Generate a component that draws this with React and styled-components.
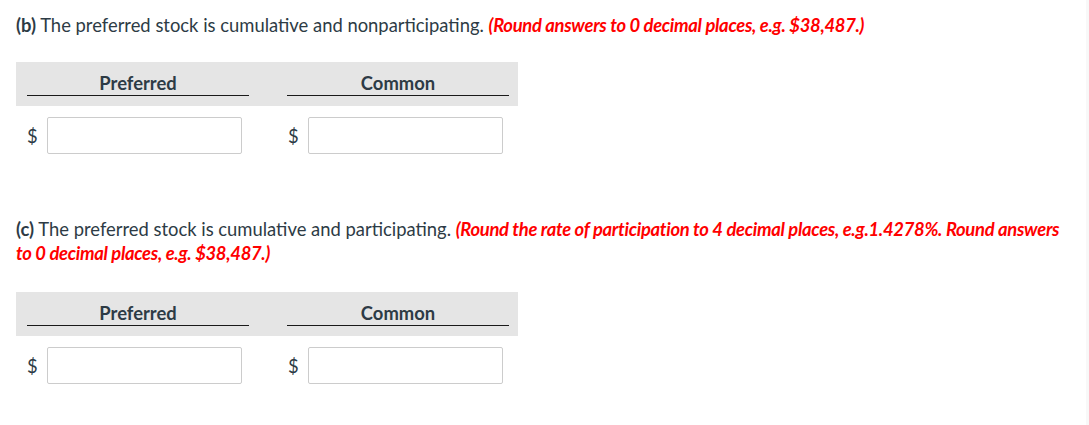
import styled, { createGlobalStyle } from "styled-components";

const GlobalStyle = createGlobalStyle`
  body {
    margin: 0;
    background: #ffffff;
    font-family: Lato, "Open Sans", "Noto Sans", sans-serif;
    color: #2d3b45;
  }
`;

const Page = styled.div`
  min-height: 425px;
  box-sizing: border-box;
  padding: 13px 8px 0 16px;
  border-right: 3px solid #f8f8f8;
`;

const Section = styled.div`
  margin-bottom: ${(p) => p.$gap || 0}px;
`;

const Question = styled.p`
  margin: 0;
  font-size: 18.4px;
  line-height: 24px;
  color: #2d3b45;
`;

const Label = styled.span`
  font-weight: 700;
`;

const Hint = styled.span`
  color: #ff0000;
  font-weight: 700;
  font-style: italic;
  letter-spacing: -0.3px;
`;

const HeaderRow = styled.div`
  display: grid;
  grid-template-columns: 252px 250px;
  width: 502px;
  height: 44px;
  margin-top: ${(p) => p.$top}px;
  background: #e5e5e5;
`;

const HeaderCell = styled.div`
  padding: 10px 0 0 ${(p) => p.$left}px;
`;

const HeaderLabel = styled.div`
  width: 222px;
  height: 23px;
  line-height: 23px;
  text-align: center;
  font-weight: 700;
  font-size: 18.4px;
  border-bottom: 1px solid #1a1a1a;
`;

const InputRow = styled.div`
  display: grid;
  grid-template-columns: 252px 250px;
  width: 502px;
  margin-top: 11px;
`;

const InputCell = styled.div`
  display: flex;
  align-items: center;
  padding-left: ${(p) => p.$left}px;
`;

const Dollar = styled.span`
  width: 20px;
  font-size: 18.4px;
  color: #2d3b45;
`;

const AmountInput = styled.input`
  box-sizing: border-box;
  width: 195px;
  height: 37px;
  border: 1px solid #cccccc;
  border-radius: 2px;
  background: #ffffff;
  outline: none;
  padding: 0 8px;
  font-family: inherit;
  font-size: 16px;
`;

const AnswerTable = ({ top }) => (
  <>
    <HeaderRow $top={top}>
      <HeaderCell $left={11}>
        <HeaderLabel>Preferred</HeaderLabel>
      </HeaderCell>
      <HeaderCell $left={19}>
        <HeaderLabel>Common</HeaderLabel>
      </HeaderCell>
    </HeaderRow>
    <InputRow>
      <InputCell $left={11}>
        <Dollar>$</Dollar>
        <AmountInput type="text" />
      </InputCell>
      <InputCell $left={20}>
        <Dollar>$</Dollar>
        <AmountInput type="text" />
      </InputCell>
    </InputRow>
  </>
);

const App = () => {
  return (
    <Page>
      <GlobalStyle />
      <Section $gap={63}>
        <Question>
          <Label>(b)</Label> The preferred stock is cumulative and
          nonparticipating.{" "}
          <Hint>(Round answers to 0 decimal places, e.g. $38,487.)</Hint>
        </Question>
        <AnswerTable top={25} />
      </Section>
      <Section>
        <Question>
          <Label>(c)</Label> The preferred stock is cumulative and
          participating.{" "}
          <Hint>
            (Round the rate of participation to 4 decimal places,
            e.g.1.4278%. Round answers to 0 decimal places, e.g. $38,487.)
          </Hint>
        </Question>
        <AnswerTable top={27} />
      </Section>
    </Page>
  );
};

export default App;
